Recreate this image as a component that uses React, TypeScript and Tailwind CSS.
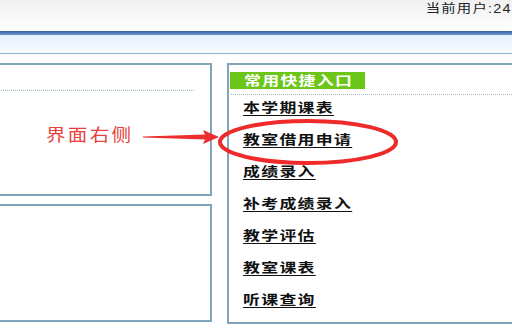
const links = [
  "本学期课表",
  "教室借用申请",
  "成绩录入",
  "补考成绩录入",
  "教学评估",
  "教室课表",
  "听课查询",
];

function Annotation() {
  return (
    <div className="pointer-events-none absolute inset-0">
      <span className="absolute left-[46px] top-[124px] origin-left scale-x-[1.15] text-[17px] leading-[24px] tracking-[2px] text-[#e8403c]">
        界面右侧
      </span>
      <svg className="absolute left-0 top-0" width="512" height="336">
        <polygon points="143,136.5 205,134.5 203,130 219,137 203,144 205,139.5 143,137.5" fill="#ec2e2e" />
        <ellipse cx="308" cy="142" rx="88" ry="21" fill="none" stroke="#ee2a2a" strokeWidth="4" />
      </svg>
    </div>
  );
}

export default function App() {
  return (
    <div
      className="relative h-[336px] w-[512px] overflow-hidden bg-white"
      style={{ fontFamily: '"Liberation Sans", "Noto Sans CJK SC", sans-serif' }}
    >
      <div className="flex h-[31px] justify-end bg-gradient-to-b from-[#f0f0f0] to-white">
        <span className="origin-right scale-x-[1.2] pt-[1px] text-[12px] leading-[16px] tracking-[1px] text-[#222]">
          当前用户:24
        </span>
      </div>
      <div className="h-[4px] bg-gradient-to-b from-[#3b62a0] to-[#6f98cf]" />
      <div className="h-[19px] border-b border-[#8fb4d2] bg-gradient-to-b from-[#e6f2fc] to-[#f7fbff]" />

      <div className="flex gap-[15px] pt-[9px]">
        <div className="-ml-[6px] flex w-[218px] flex-col gap-[8px]">
          <div className="h-[133px] border-2 border-[#7ea5bc] pt-[25px]">
            <div className="mr-[16px] border-t border-dotted border-[#9bb]" />
          </div>
          <div className="h-[118px] border-2 border-[#7ea5bc]" />
        </div>

        <div className="-mr-[10px] h-[261px] flex-1 border-2 border-[#7ea5bc] pt-[7px]">
          <div className="ml-[1px] flex h-[17px] w-[135px] items-center bg-[#6cc61a] pl-[14px]">
            <span className="origin-left scale-x-[1.3] text-[13px] font-bold tracking-[1px] text-white">
              常用快捷入口
            </span>
          </div>
          <div className="mx-[2px] mt-[5px] border-t border-dotted border-[#a8b8c0]" />
          <div className="flex flex-col items-start gap-[12px] pl-[14px] pt-[3px]">
            {links.map((l) => (
              <a
                key={l}
                href="#"
                className="h-[20px] origin-left scale-x-[1.3] text-[13px] leading-[20px] font-bold tracking-[1px] text-[#111] underline underline-offset-[3px]"
              >
                {l}
              </a>
            ))}
          </div>
        </div>
      </div>

      <Annotation />
    </div>
  );
}
